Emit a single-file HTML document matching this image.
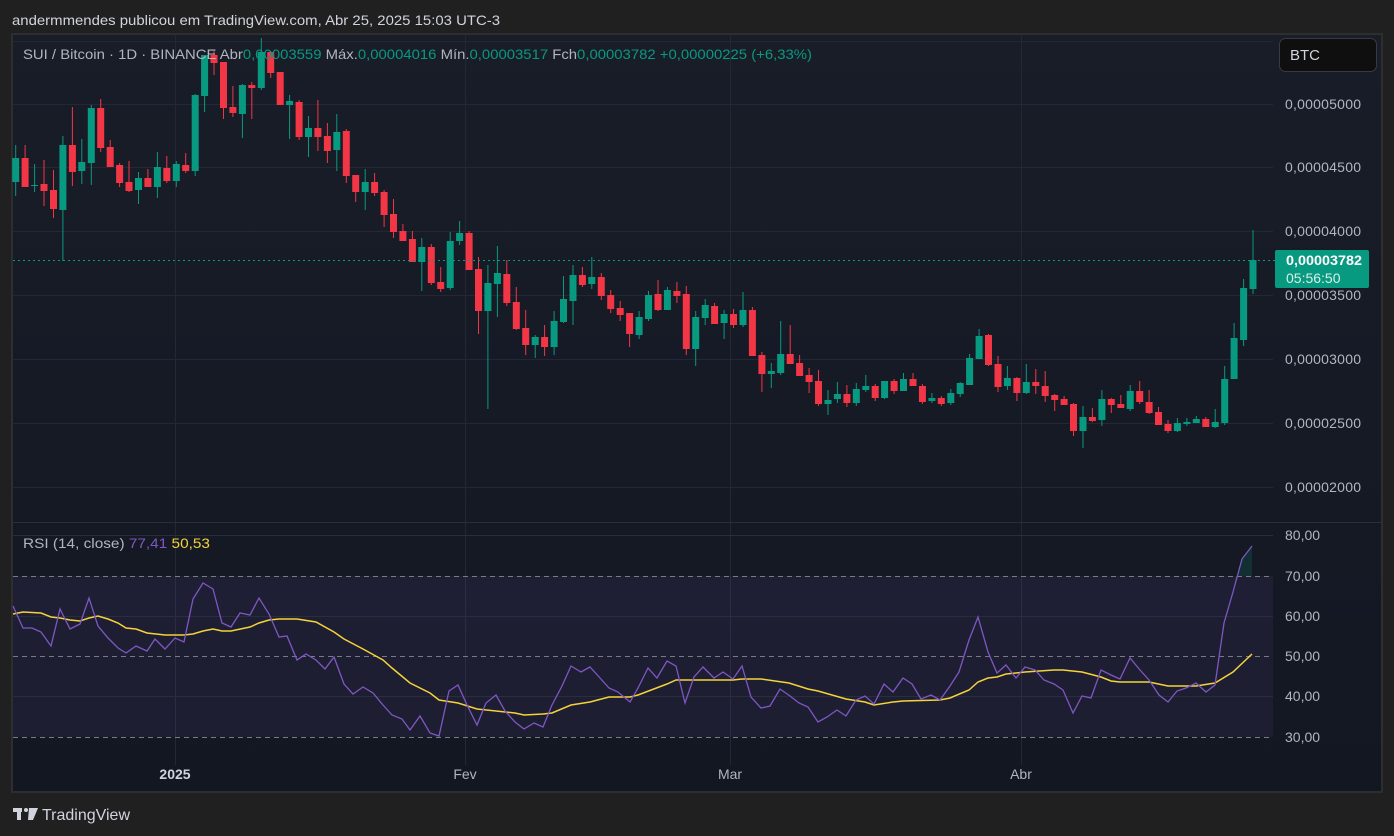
<!DOCTYPE html>
<html><head><meta charset="utf-8"><style>
html,body{margin:0;padding:0;background:#202020;width:1394px;height:836px;overflow:hidden;font-family:"Liberation Sans",sans-serif}
</style></head><body>
<svg id="s" width="1394" height="836" style="position:absolute;left:0;top:0" xmlns="http://www.w3.org/2000/svg">
<defs><linearGradient id="bg" x1="0" y1="0" x2="0" y2="1"><stop offset="0" stop-color="#191d28"/><stop offset="1" stop-color="#131722"/></linearGradient></defs>
<text x="12" y="25" font-family="Liberation Sans,sans-serif" font-size="14" fill="#d1d4dc" textLength="488" lengthAdjust="spacingAndGlyphs">andermmendes publicou em TradingView.com, Abr 25, 2025 15:03 UTC-3</text>
<rect x="12" y="34" width="1370" height="758" fill="url(#bg)" stroke="#2e2e2e" stroke-width="2"/>
<g stroke="#242834" stroke-width="1">
<line x1="13" y1="104.5" x2="1273" y2="104.5"/><line x1="13" y1="167.5" x2="1273" y2="167.5"/><line x1="13" y1="231.5" x2="1273" y2="231.5"/><line x1="13" y1="295.5" x2="1273" y2="295.5"/><line x1="13" y1="359.5" x2="1273" y2="359.5"/><line x1="13" y1="423.5" x2="1273" y2="423.5"/><line x1="13" y1="487.5" x2="1273" y2="487.5"/>
<line x1="13" y1="41.5" x2="1273" y2="41.5"/>
<line x1="175.5" y1="35" x2="175.5" y2="765"/><line x1="465.5" y1="35" x2="465.5" y2="765"/><line x1="730.5" y1="35" x2="730.5" y2="765"/><line x1="1021.5" y1="35" x2="1021.5" y2="765"/>
</g>
<line x1="13" y1="522.5" x2="1381" y2="522.5" stroke="#2a2e39" stroke-width="1"/>
<rect x="13" y="576" width="1260" height="161" fill="#7e57c2" fill-opacity="0.1"/>
<g stroke="#2a2d3b"><line x1="13" y1="535.5" x2="1273" y2="535.5"/><line x1="13" y1="616.5" x2="1273" y2="616.5"/><line x1="13" y1="696.5" x2="1273" y2="696.5"/></g>
<g stroke="#787b86" stroke-dasharray="5,4"><line x1="13" y1="576.5" x2="1273" y2="576.5"/><line x1="13" y1="656.5" x2="1273" y2="656.5"/><line x1="13" y1="737.5" x2="1273" y2="737.5"/></g>
<polygon points="1233,592 1236,576 1252,576 1252,546 1242,559" fill="#089981" fill-opacity="0.18"/>
<g id="c"></g>
<line x1="13" y1="260.5" x2="1275" y2="260.5" stroke="#089981" stroke-dasharray="2,3"/>
<polyline fill="none" stroke="#f5d33a" stroke-width="1.5" points="13,614 23,612 41,613 51,617 60,618 70,620 80,621 89,618 98,616 108,619 118,623 126,628 136,629 147,633 165,635 184,635 193,634 203,631 213,629 222,631 231,631 250,627 259,623 269,620 279,619 297,619 316,622 334,632 344,639 363,649 383,660 392,668 410,683 430,693 439,700 458,703 477,709 496,711 515,713 524,715 543,714 552,713 571,705 590,702 609,697 630,697 638,695 667,684 676,680 733,680 742,679 761,679 789,683 808,689 818,691 846,699 865,702 874,705 893,702 903,701 940,700 950,698 969,690 978,682 988,678 997,677 1006,674 1025,672 1054,670 1063,670 1082,672 1101,677 1111,681 1120,682 1149,682 1168,686 1196,686 1215,683 1233,672 1252,654"/>
<polyline fill="none" stroke="#7e57c2" stroke-width="1.3" points="13,606 23,628 32,628 41,632 51,646 60,609 70,629 80,624 89,598 98,626 108,638 118,648 126,653 136,646 147,651 155,639 165,649 175,638 184,642 193,599 203,583 213,589 222,623 231,627 240,613 250,615 259,598 269,614 279,637 287,636 297,660 306,654 316,660 325,669 334,657 344,684 353,694 363,687 373,693 383,705 392,715 402,719 410,730 420,716 430,733 439,736 449,691 458,685 467,705 477,725 486,703 496,695 505,711 515,722 524,729 534,723 543,727 552,705 562,686 571,666 581,672 590,667 600,678 609,688 618,692 630,702 638,688 648,668 657,678 667,661 676,666 685,703 694,677 703,667 714,678 723,672 733,679 742,666 751,697 761,708 770,706 780,689 790,696 799,703 808,707 818,722 827,717 837,710 846,716 856,700 865,696 874,704 884,684 893,692 903,678 912,684 921,699 931,695 940,700 950,686 959,672 969,640 978,617 988,652 997,673 1006,665 1016,678 1025,667 1035,670 1044,680 1054,684 1063,690 1073,713 1082,696 1091,698 1101,670 1111,675 1120,679 1130,658 1140,670 1149,680 1159,695 1168,702 1177,691 1186,688 1196,683 1206,692 1215,685 1224,623 1233,592 1242,559 1252,546"/>
<rect x="1275" y="250" width="94" height="38" rx="2" fill="#089981"/>
<rect x="1279.5" y="38.5" width="97" height="33" rx="6" fill="#0f0f0f" stroke="#363a45"/>
<g font-family="Liberation Sans,sans-serif" font-size="14" fill="#b2b5be">
<g lengthAdjust="spacingAndGlyphs">
<text x="1285" y="109" textLength="76">0,00005000</text><text x="1285" y="172" textLength="76">0,00004500</text><text x="1285" y="236" textLength="76">0,00004000</text><text x="1285" y="300" textLength="76">0,00003500</text><text x="1285" y="364" textLength="76">0,00003000</text><text x="1285" y="428" textLength="76">0,00002500</text><text x="1285" y="492" textLength="76">0,00002000</text>
</g>
<text x="1285" y="540">80,00</text><text x="1285" y="581">70,00</text><text x="1285" y="621">60,00</text><text x="1285" y="661">50,00</text><text x="1285" y="701">40,00</text><text x="1285" y="742">30,00</text>
<text x="175" y="779" text-anchor="middle" font-weight="bold" fill="#d1d4dc">2025</text>
<text x="465" y="779" text-anchor="middle">Fev</text><text x="730" y="779" text-anchor="middle">Mar</text><text x="1021" y="779" text-anchor="middle">Abr</text>
<text x="1290" y="60" fill="#d1d4dc" font-size="15">BTC</text>
<text x="1286" y="265" fill="#fff" font-weight="bold" textLength="76" lengthAdjust="spacingAndGlyphs">0,00003782</text>
<text x="1286" y="283" fill="#d8f0ea">05:56:50</text>
</g>
<g font-family="Liberation Sans,sans-serif" font-size="14">
<text x="23" y="59" fill="#b2b5be" textLength="789" lengthAdjust="spacingAndGlyphs">SUI / Bitcoin · 1D · BINANCE  Abr<tspan fill="#089981">0,00003559</tspan>  Máx.<tspan fill="#089981">0,00004016</tspan>  Mín.<tspan fill="#089981">0,00003517</tspan>  Fch<tspan fill="#089981">0,00003782</tspan>  <tspan fill="#089981">+0,00000225 (+6,33%)</tspan></text>
<text x="23" y="548" fill="#b2b5be" textLength="187" lengthAdjust="spacingAndGlyphs">RSI (14, close)  <tspan fill="#7e57c2">77,41</tspan>  <tspan fill="#f5d33a">50,53</tspan></text>
</g>
<g fill="#d1d4dc"><rect x="13" y="808" width="9" height="4"/><rect x="17" y="808" width="4" height="12"/><circle cx="26" cy="810" r="2"/><polygon points="29,808 38,808 33,820 28,820"/></g>
<text x="42" y="820" font-family="Liberation Sans,sans-serif" font-size="16" fill="#d1d4dc" textLength="88" lengthAdjust="spacingAndGlyphs">TradingView</text>
</svg>
<script>
var d=[[182,158,145,196],[158,187,145,187],[186,185,164,192],[184,191,160,206],[190,209,170,218],[210,145,136,261],[145,172,107,186],[171,162,139,184],[163,108,105,185],[108,148,99,152],[147,167,140,167],[165,183,163,187],[182,191,161,192],[190,178,172,204],[178,187,169,187],[187,167,152,198],[168,181,156,183],[181,164,161,187],[165,171,153,173],[171,95,94,176],[96,55,55,112],[55,63,51,75],[62,108,62,119],[107,113,86,117],[114,85,84,138],[85,88,82,119],[88,52,38,90],[52,73,51,78],[72,105,72,105],[105,101,95,139],[102,137,100,140],[137,128,116,157],[128,137,100,151],[136,151,123,163],[150,132,114,171],[131,176,129,183],[175,192,175,202],[192,182,169,210],[182,193,173,196],[192,215,190,227],[214,232,199,238],[231,241,224,241],[239,262,231,262],[262,247,238,291],[247,283,244,285],[282,289,267,292],[288,241,232,290],[241,233,221,245],[233,270,231,270],[269,311,257,334],[311,283,265,409],[284,273,246,317],[274,303,260,306],[302,329,287,330],[328,345,310,355],[345,337,335,358],[337,347,325,356],[347,321,311,355],[322,299,276,323],[301,275,265,325],[275,285,267,287],[284,277,257,289],[277,296,273,300],[295,309,290,313],[308,315,301,321],[313,334,313,347],[335,317,311,339],[319,295,291,321],[294,310,280,311],[310,290,287,310],[291,296,282,303],[294,349,286,355],[349,317,311,366],[318,305,299,325],[306,324,303,324],[323,314,310,339],[314,325,309,328],[325,310,292,327],[310,356,307,356],[355,374,352,392],[374,371,363,388],[373,354,321,375],[354,364,325,364],[363,376,355,376],[375,382,368,393],[381,404,370,406],[404,400,390,415],[399,394,382,403],[394,403,385,407],[403,389,383,406],[390,386,375,392],[386,398,384,401],[398,381,381,399],[381,391,379,394],[391,379,373,391],[379,386,373,386],[386,402,384,404],[401,398,393,403],[398,404,396,406],[403,393,389,405],[394,383,382,397],[385,358,354,385],[359,336,329,359],[335,365,334,366],[364,387,356,392],[386,378,366,390],[378,393,377,401],[393,382,364,394],[382,386,369,394],[386,396,371,402],[395,400,394,411],[399,405,396,405],[404,431,403,436],[431,417,406,448],[417,421,408,422],[420,399,390,426],[399,405,398,413],[404,408,395,408],[409,391,385,411],[391,402,381,404],[402,413,390,414],[412,425,407,425],[424,431,420,433],[431,423,418,432],[424,422,418,426],[423,419,416,423],[419,427,417,427],[427,422,409,428],[423,379,366,425],[379,338,323,379],[340,288,279,346],[289,260,230,294]];
var g=document.getElementById('c'),h='';
for(var i=0;i<d.length;i++){var x=15.7+i*9.445,o=d[i][0],c=d[i][1],col=c<=o?'#089981':'#f23645',t=Math.min(o,c),b=Math.max(Math.abs(o-c),1);
h+='<line x1="'+x.toFixed(1)+'" x2="'+x.toFixed(1)+'" y1="'+d[i][2]+'" y2="'+d[i][3]+'" stroke="'+col+'" stroke-width="1"/>';
h+='<rect x="'+(x-3.5).toFixed(1)+'" y="'+t+'" width="7" height="'+b+'" fill="'+col+'"/>';}
g.innerHTML=h;
</script>
</body></html>
